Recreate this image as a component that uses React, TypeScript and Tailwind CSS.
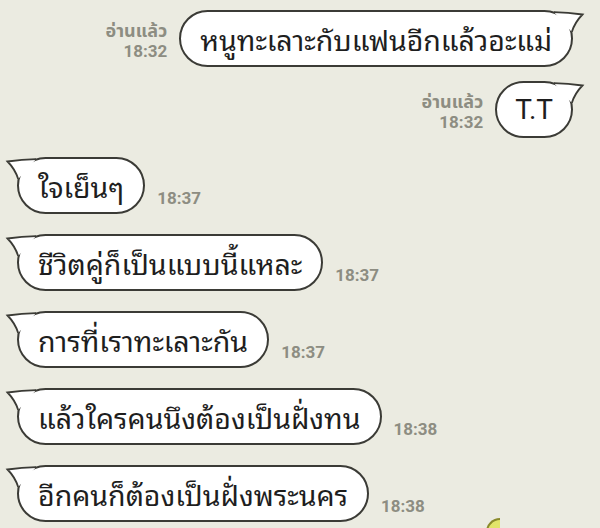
import React from 'react';

interface Message {
  text: string;
  time: string;
  mine?: boolean;
  big?: boolean;
}

const messages: Message[] = [
  { text: 'หนูทะเลาะกับแฟนอีกแล้วอะแม่', time: '18:32', mine: true },
  { text: 'T.T', time: '18:32', mine: true, big: true },
  { text: 'ใจเย็นๆ', time: '18:37' },
  { text: 'ชีวิตคู่ก็เป็นแบบนี้แหละ', time: '18:37' },
  { text: 'การที่เราทะเลาะกัน', time: '18:37' },
  { text: 'แล้วใครคนนึงต้องเป็นฝั่งทน', time: '18:38' },
  { text: 'อีกคนก็ต้องเป็นฝั่งพระนคร', time: '18:38' },
];

// little tail at the top corner of the bubble
const Tail: React.FC<{ mine?: boolean }> = ({ mine }) => (
  <svg
    className={`absolute top-0 ${mine ? 'right-[-12px] scale-x-[-1]' : 'left-[-12px]'}`}
    width="34"
    height="28"
    viewBox="-12 0 34 28"
  >
    <path d="M19 2.2 Q5 2.5 -9.5 4.5 Q-2 12 1.2 22" fill="#ffffff" stroke="#3b3b36" strokeWidth="1.8" />
  </svg>
);

const Bubble: React.FC<{ msg: Message }> = ({ msg }) => (
  <div className="relative">
    <div
      className={`h-[57px] flex items-center rounded-full border-2 border-[#3b3b36] bg-white text-[#1e1e1e] leading-none ${
        msg.big ? 'px-[18px] text-[28px]' : 'px-[19px] text-[28.5px]'
      }`}
      style={{
        fontFamily: msg.big
          ? 'Roboto, sans-serif'
          : '"Noto Sans Thai Looped", "Loma", "Garuda", "Noto Sans Thai", "Noto Sans", sans-serif',
      }}
    >
      {msg.text}
    </div>
    <Tail mine={msg.mine} />
  </div>
);

export default function App() {
  return (
    <div
      className="w-[600px] h-[528px] overflow-hidden bg-[#ebebe1] relative"
      style={{ fontFamily: 'Roboto, "Noto Sans Thai", sans-serif' }}
    >
      <div className="flex flex-col pt-[10px]">
        {messages.map((m, i) =>
          m.mine ? (
            <div key={i} className={`flex justify-end items-end gap-[12px] pr-[27px] ${i === 1 ? 'mt-[14px]' : ''}`}>
              <div className="flex flex-col items-end mb-[6px] text-[#8d8d82] font-bold leading-[20px]">
                <span className="text-[18px]">อ่านแล้ว</span>
                <span className="text-[17px]">{m.time}</span>
              </div>
              <Bubble msg={m} />
            </div>
          ) : (
            <div key={i} className={`flex items-end gap-[12px] pl-[17px] ${i === 2 ? 'mt-[19px]' : 'mt-[20px]'}`}>
              <Bubble msg={m} />
              <span className="mb-[3px] text-[17px] font-bold text-[#8d8d82]">{m.time}</span>
            </div>
          )
        )}
      </div>
      <div className="absolute left-[486px] top-[518px] w-[14px] h-[14px] rounded-tl-full border-l-2 border-t-2 border-[#8a8a2a] bg-[#e2e56a]" />
    </div>
  );
}
